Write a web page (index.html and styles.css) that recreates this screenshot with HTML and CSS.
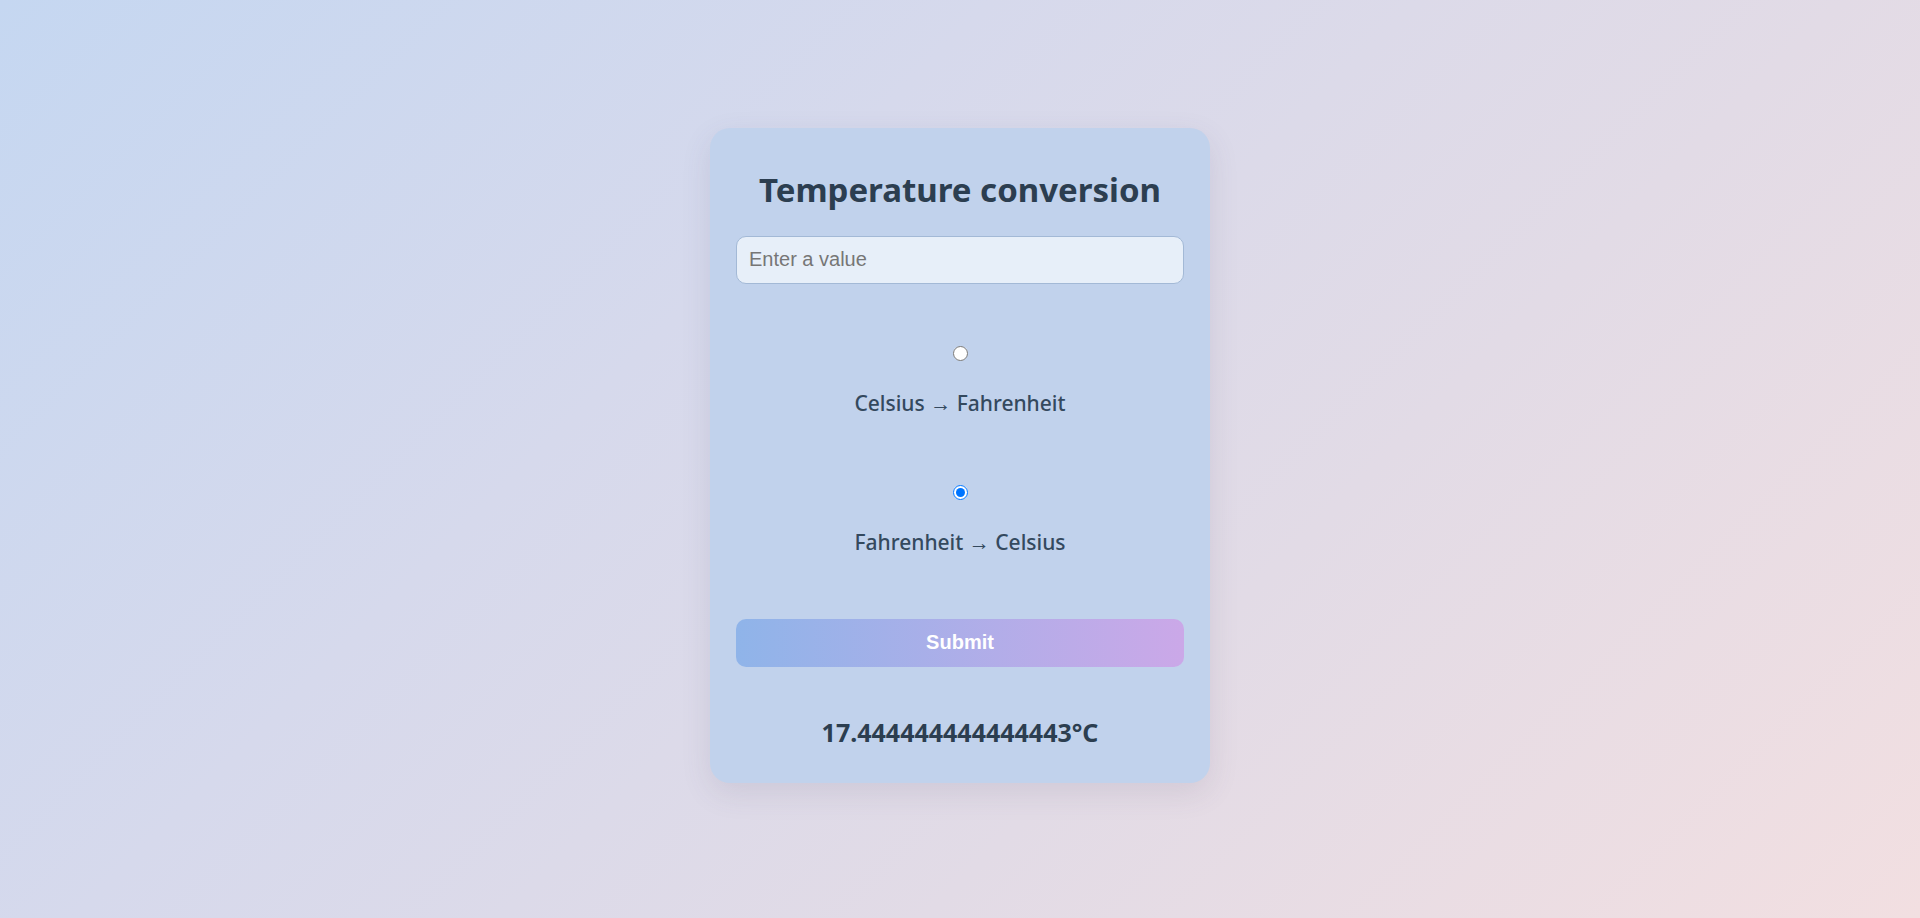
FILE: index.html
```html
<!DOCTYPE html>
<html lang="en">
<head>
<meta charset="utf-8">
<title>Temperature conversion</title>
<link rel="stylesheet" href="styles.css">
</head>
<body>
<form class="card">
  <h1 class="title">Temperature conversion</h1>
  <input class="value-input" type="text" placeholder="Enter a value">
  <div class="option option-first">
    <input class="radio" type="radio" name="mode" id="c2f">
    <label class="option-label" for="c2f">Celsius → Fahrenheit</label>
  </div>
  <div class="option option-second">
    <input class="radio" type="radio" name="mode" id="f2c" checked>
    <label class="option-label" for="f2c">Fahrenheit → Celsius</label>
  </div>
  <button class="submit" type="button">Submit</button>
  <p class="result">17.444444444444443°C</p>
</form>
</body>
</html>
```
FILE: styles.css
```css
html, body {
  margin: 0;
  padding: 0;
}
body {
  min-height: 100vh;
  box-sizing: border-box;
  padding-bottom: 8px;
  display: flex;
  justify-content: center;
  align-items: center;
  background: linear-gradient(135deg, #c5d7f1 0%, #d6d9ec 35%, #e2dbe6 65%, #f2dfe1 100%);
  font-family: "Noto Sans", "Open Sans", sans-serif;
  color: #2c3e50;
}
.card {
  width: 500px;
  box-sizing: border-box;
  padding: 40px 26px 35px;
  background: #c1d2ec;
  border-radius: 20px;
  box-shadow: 0 10px 30px rgba(80, 70, 110, 0.12);
  display: flex;
  flex-direction: column;
  align-items: stretch;
}
.title {
  margin: 0 0 24px;
  font-size: 33px;
  line-height: 44px;
  font-weight: 700;
  text-align: center;
  color: #2c3e50;
}
.value-input {
  height: 48px;
  box-sizing: border-box;
  margin: 0;
  padding: 0 12px;
  border: 1px solid #a3b9d6;
  border-radius: 10px;
  background: #e7eff9;
  font-family: "Liberation Sans", Arial, sans-serif;
  font-size: 20px;
  color: #333;
  outline: none;
}
.value-input::placeholder {
  color: #767676;
}
.option {
  display: flex;
  flex-direction: column;
  align-items: center;
}
.option-first {
  margin-top: 62px;
}
.option-second {
  margin-top: 70px;
}
.radio {
  width: 15px;
  height: 15px;
  margin: 0;
}
.option-label {
  margin-top: 30px;
  font-size: 21px;
  line-height: 24px;
  font-weight: 500;
  color: #34495e;
}
.submit {
  margin-top: 65px;
  height: 48px;
  border: none;
  border-radius: 10px;
  background: linear-gradient(90deg, #8fb4e9, #cba8e8);
  color: #fff;
  font-family: "Liberation Sans", Arial, sans-serif;
  font-size: 20px;
  font-weight: 700;
}
.result {
  margin: 49px 0 0;
  font-size: 25px;
  line-height: 32px;
  font-weight: 700;
  text-align: center;
  color: #2c3e50;
}
```
